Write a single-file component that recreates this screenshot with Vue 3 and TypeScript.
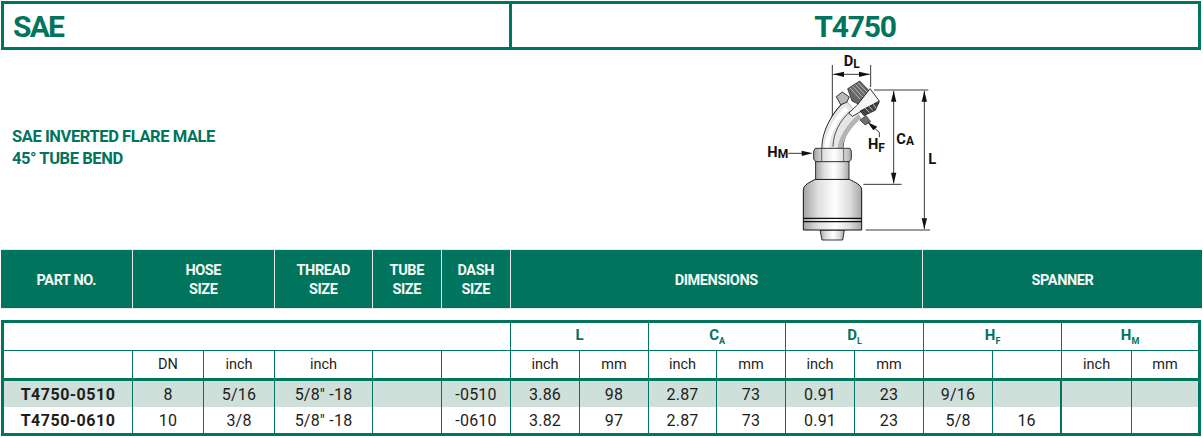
<template>
  <div class="sheet">
    <div class="title-box">
      <div class="title-left">SAE</div>
      <div class="title-right">T4750</div>
    </div>

    <div class="intro">
      <div class="desc">
        <div>SAE INVERTED FLARE MALE</div>
        <div>45° TUBE BEND</div>
      </div>
      <svg class="drawing" viewBox="0 15 720 597" width="240" height="199">
        <defs>
          <linearGradient id="metal" x1="0" x2="1" y1="0" y2="0">
            <stop offset="0" stop-color="#a3a3a3" />
            <stop offset="0.25" stop-color="#dedede" />
            <stop offset="0.55" stop-color="#ffffff" />
            <stop offset="0.8" stop-color="#dcdcdc" />
            <stop offset="1" stop-color="#a6a6a6" />
          </linearGradient>
        </defs>

        <!-- dimension lines, behind the part -->
        <g class="dim">
          <path d="M337 60V300M452 60V126M462 135H625M430 418H545M437 555H630" />
          <path d="M340 88H449M521 138V415M613 138V552M205 325H270" />
          <path d="M478 276V262L450 238" />
        </g>

        <!-- tube -->
        <path d="M337 312C337 268 362 222 398 190" class="tube-edge" />
        <path d="M337 312C337 268 362 222 398 190" class="tube-fill" />
        <path d="M320 312C322 268 345 226 380 190" class="tube-light" />
        <path d="M360 312C362 280 386 242 420 214" class="tube-shade" />
        <path d="M339 305C340 265 358 228 392 198" class="tube-line" />

        <!-- upper hex -->
        <path d="M349 155L367 141L388 156L380 172L362 179Z" fill="#b8b8b8" stroke="#111" stroke-width="2.5" />
        <!-- knurled end -->
        <path d="M383 131L419 108L452 142L416 178L396 168Z" fill="#666" stroke="#111" stroke-width="2" />
        <path d="M390 128L420 162M398 123L428 156M406 118L436 150M414 113L444 144" stroke="#cfcfcf" stroke-width="2.5" fill="none" />
        <!-- collar -->
        <path d="M450 131L478 168L445 186L398 214L386 205L412 180Z" fill="#f6f6f6" stroke="#111" stroke-width="2.5" />
        <!-- threads -->
        <path d="M478 170L466 196L432 212L420 198Z" fill="#444" stroke="#111" stroke-width="2" />
        <path d="M436 190L448 202M448 184L458 196M460 178L468 190" stroke="#d6d6d6" stroke-width="2.5" fill="none" />
        <!-- lower hex -->
        <path d="M420 225L438 212L452 230L435 240Z" fill="#707070" stroke="#222" stroke-width="2" />

        <!-- stem -->
        <path d="M300 555H373L368 585H306Z" fill="url(#metal)" stroke="#111" stroke-width="2.5" />
        <!-- ferrule -->
        <path d="M250 436C250 418 270 412 286 403H388C404 412 425 418 425 436V555H250Z" fill="url(#metal)" stroke="#111" stroke-width="3" />
        <path d="M250 520H425M250 530H425" stroke="#111" stroke-width="3.5" />
        <!-- neck -->
        <rect x="287" y="348" width="100" height="55" fill="url(#metal)" stroke="#111" stroke-width="2.5" />
        <!-- nut -->
        <path d="M286 310H390L394 318V342L388 350H287L281 342V318Z" fill="url(#metal)" stroke="#111" stroke-width="2.5" />
        <path d="M305 312V348M371 312V348" stroke="#333" stroke-width="2" />

        <!-- arrows -->
        <g fill="#111">
          <path d="M339 88L372 80V96ZM450 88L417 80V96Z" />
          <path d="M521 137L513 170H529ZM521 416L513 383H529Z" />
          <path d="M613 137L605 170H621ZM613 553L605 520H621Z" />
          <path d="M278 325L245 317V333Z" />
          <path d="M443 232L472 245L460 256Z" />
        </g>

        <!-- labels -->
        <g class="label">
          <text x="371" y="62">D<tspan class="sub" dy="7">L</tspan></text>
          <text x="142" y="335">H<tspan class="sub" dy="5">M</tspan></text>
          <text x="444" y="312">H<tspan class="sub" dy="8">F</tspan></text>
          <text x="529" y="296">C<tspan class="sub" dy="5">A</tspan></text>
          <text x="625" y="358">L</text>
        </g>
      </svg>
    </div>

    <div class="head-row">
      <div class="head-cell" v-for="h in headCells" :key="h">
        <span>{{ h }}</span>
      </div>
    </div>

    <div class="table-wrap">
      <table>
        <colgroup>
          <col v-for="(w, i) in colWidths" :key="i" :style="{ width: w + 'px' }" />
        </colgroup>
        <tbody>
          <tr class="group-row">
            <td colspan="6"></td>
            <td colspan="2">L</td>
            <td colspan="2">C<sub>A</sub></td>
            <td colspan="2">D<sub>L</sub></td>
            <td colspan="2">H<sub>F</sub></td>
            <td colspan="2">H<sub>M</sub></td>
          </tr>
          <tr class="unit-row">
            <td v-for="(u, i) in units" :key="i">{{ u }}</td>
          </tr>
          <tr v-for="(row, r) in rows" :key="row[0]" class="data-row" :class="{ shaded: r === 0 }">
            <td v-for="(c, i) in row" :key="i" :class="{ part: i === 0, split: i === 13 }">{{ c }}</td>
          </tr>
        </tbody>
      </table>
    </div>
  </div>
</template>

<script setup lang="ts">
const headCells = ['PART NO.', 'HOSE\nSIZE', 'THREAD\nSIZE', 'TUBE\nSIZE', 'DASH\nSIZE', 'DIMENSIONS', 'SPANNER']

const colWidths = [129, 71, 71, 98, 69, 69, 69, 69, 68, 69, 69, 69, 69, 69, 70, 66]

const units = ['', 'DN', 'inch', 'inch', '', '', 'inch', 'mm', 'inch', 'mm', 'inch', 'mm', '', '', 'inch', 'mm']

const rows: string[][] = [
  ['T4750-0510', '8', '5/16', '5/8" -18', '', '-0510', '3.86', '98', '2.87', '73', '0.91', '23', '9/16', '', '', ''],
  ['T4750-0610', '10', '3/8', '5/8" -18', '', '-0610', '3.82', '97', '2.87', '73', '0.91', '23', '5/8', '16', '', '']
]
</script>

<style>
html,
body {
  margin: 0;
  background: #fff;
}
</style>

<style scoped>
.sheet {
  width: 1203px;
  height: 438px;
  padding-top: 1px;
  box-sizing: border-box;
  overflow: hidden;
  font-family: Roboto, "Liberation Sans", sans-serif;
  color: #1d1d1b;
}

.title-box {
  display: grid;
  grid-template-columns: 505px 1fr;
  height: 49px;
  box-sizing: border-box;
  margin: 0 2px 0 1px;
  border: 3px solid #00745c;
  color: #00745c;
  font-size: 30px;
  font-weight: 700;
  letter-spacing: -1.8px;
  line-height: 46px;
}

.title-left {
  padding-left: 9px;
}

.title-right {
  border-left: 3px solid #00745c;
  text-align: center;
  letter-spacing: -1.2px;
}

.intro {
  display: flex;
  height: 199px;
}

.desc {
  width: 720px;
  padding: 76px 0 0 12px;
  box-sizing: border-box;
  color: #00745c;
  font-size: 16.5px;
  font-weight: 700;
  line-height: 22px;
  letter-spacing: -0.42px;
}

.drawing {
  display: block;
}

.dim path {
  fill: none;
  stroke: #111;
  stroke-width: 2.5;
}

.label text {
  font-family: Roboto, "Liberation Sans", sans-serif;
  font-size: 44px;
  font-weight: 700;
  fill: #111;
}

.label .sub {
  font-size: 36px;
}

.tube-edge,
.tube-fill,
.tube-light,
.tube-shade,
.tube-line {
  fill: none;
}

.tube-edge {
  stroke: #111;
  stroke-width: 66;
}

.tube-fill {
  stroke: #e6e6e6;
  stroke-width: 61;
}

.tube-light {
  stroke: #fff;
  stroke-width: 14;
}

.tube-shade {
  stroke: #b4b4b4;
  stroke-width: 14;
}

.tube-line {
  stroke: #333;
  stroke-width: 2.5;
}

.head-row {
  display: grid;
  grid-template-columns: 130.5px 140.5px 96.5px 67.5px 67.5px 410.5px 1fr;
  gap: 1.5px;
  height: 60px;
  box-sizing: border-box;
  margin: 0 1px 11px 1px;
  background: #e3ecea;
  padding: 1px 0;
}

.head-cell {
  display: flex;
  align-items: center;
  justify-content: center;
  padding-top: 2px;
  background: #00745c;
  color: #f4f8f6;
  font-size: 14.5px;
  font-weight: 700;
  line-height: 19px;
  letter-spacing: -0.4px;
  text-align: center;
  white-space: pre-line;
}

.table-wrap {
  width: 1200px;
  margin-left: 1px;
  box-sizing: border-box;
  border: 3px solid #00745c;
}

table {
  width: 1194px;
  table-layout: fixed;
  border-collapse: separate;
  border-spacing: 0;
}

td {
  padding: 0;
  border-right: 1px solid #00745c;
  text-align: center;
  white-space: nowrap;
}

td:last-child {
  border-right: none;
}

.group-row td {
  height: 25px;
  padding-bottom: 2px;
  border-bottom: 1px solid #00745c;
  color: #00745c;
  font-size: 15px;
  font-weight: 700;
  line-height: 15px;
}

.group-row sub {
  font-size: 9px;
  line-height: 0;
}

.unit-row td {
  height: 27px;
  border-bottom: 3px solid #00745c;
  font-size: 14.5px;
}

.data-row td {
  height: 25px;
  padding-top: 1px;
  font-size: 16px;
  line-height: 18px;
  letter-spacing: 0.2px;
}

.shaded td {
  background: #cfdfd9;
}

.data-row td.part {
  font-weight: 700;
  letter-spacing: 0.5px;
}

.data-row td.split {
  border-right: 2px solid #00745c;
}
</style>
